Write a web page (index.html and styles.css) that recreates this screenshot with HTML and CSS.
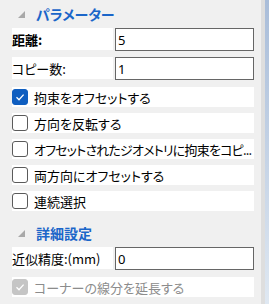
FILE: index.html
```html
<!DOCTYPE html>
<html lang="ja">
<head>
<meta charset="utf-8">
<link rel="stylesheet" href="styles.css">
</head>
<body>
<div class="panel">
  <div class="section-head head-first">
    <svg class="tri" width="7" height="7" viewBox="0 0 7 7"><polygon points="7,0 7,7 0,7" fill="#a8a8a8"/></svg>
    <span>パラメーター</span>
  </div>
  <div class="field">
    <div class="label bold">距離:</div>
    <div class="input">5</div>
  </div>
  <div class="field">
    <div class="label">コピー数:</div>
    <div class="input">1</div>
  </div>
  <div class="check-row">
    <span class="box checked"><svg width="16" height="16" viewBox="0 0 16 16"><path d="M4.5 8.3 L7 10.7 L11.6 5.6" fill="none" stroke="#fff" stroke-width="1.3"/></svg></span>
    <span class="text">拘束をオフセットする</span>
  </div>
  <div class="check-row">
    <span class="box"></span>
    <span class="text">方向を反転する</span>
  </div>
  <div class="check-row">
    <span class="box"></span>
    <span class="text tight">オフセットされたジオメトリに拘束をコピ...</span>
  </div>
  <div class="check-row">
    <span class="box"></span>
    <span class="text">両方向にオフセットする</span>
  </div>
  <div class="check-row">
    <span class="box"></span>
    <span class="text">連続選択</span>
  </div>
  <div class="section-head head-second">
    <svg class="tri" width="7" height="7" viewBox="0 0 7 7"><polygon points="7,0 7,7 0,7" fill="#a8a8a8"/></svg>
    <span>詳細設定</span>
  </div>
  <div class="field">
    <div class="label">近似精度:(mm)</div>
    <div class="input">0</div>
  </div>
  <div class="check-row disabled">
    <span class="box dis"><svg width="16" height="16" viewBox="0 0 16 16"><path d="M4.5 8.3 L7 10.7 L11.6 5.6" fill="none" stroke="#fff" stroke-width="1.3"/></svg></span>
    <span class="text">コーナーの線分を延長する</span>
  </div>
</div>
<div class="strip-gray"></div>
<div class="strip-blue"></div>
</body>
</html>
```

FILE: styles.css
```css
html, body {
  margin: 0;
  padding: 0;
}
body {
  width: 269px;
  height: 304px;
  background: #f0f0f0;
  display: flex;
  overflow: hidden;
  font-family: "Noto Sans CJK JP", "Noto Sans", sans-serif;
  font-feature-settings: "palt";
  font-size: 13px;
  color: #000;
}
.panel {
  width: 242px;
  padding: 0 7px 0 12px;
  display: flex;
  flex-direction: column;
}
.strip-gray {
  width: 4px;
  background: #dedede;
}
.strip-blue {
  width: 4px;
  background: linear-gradient(#a9bdd9, #dfe8f2);
}
.section-head {
  display: flex;
  align-items: center;
  color: #1b66c9;
  font-weight: bold;
  font-size: 14px;
}
.head-first {
  height: 28px;
}
.head-second {
  height: 30px;
  padding-top: 2px;
  box-sizing: border-box;
}
.tri {
  margin-left: 6px;
  margin-right: 11px;
}
.field {
  display: flex;
  height: 23px;
  margin-bottom: 6px;
}
.label {
  width: 101px;
  background: #fff;
  display: flex;
  align-items: center;
  white-space: nowrap;
  height: 22px;
}
.label.bold {
  font-weight: bold;
}
.input {
  margin-left: 2px;
  flex: 1;
  border: 1px solid #666;
  background: #fff;
  box-sizing: border-box;
  padding-left: 2px;
  display: flex;
  align-items: center;
  font-family: "Noto Sans", sans-serif;
}
.check-row {
  display: flex;
  align-items: center;
  height: 20px;
  background: #fff;
  margin-bottom: 6px;
}
.field + .check-row {
  margin-top: 1px;
}
.box {
  width: 16px;
  height: 16px;
  box-sizing: border-box;
  border: 1px solid #5a5a5a;
  border-radius: 3px;
  background: #fff;
  flex: none;
  position: relative;
}
.box svg {
  position: absolute;
  left: -1px;
  top: -1px;
}
.box.checked {
  background: #0f5ec0;
  border-color: #0f5ec0;
}
.box.dis {
  background: #c5c5c5;
  border-color: #c5c5c5;
}
.text {
  margin-left: 6px;
  white-space: nowrap;
}
.tight {
  letter-spacing: -0.8px;
}
.disabled .text {
  color: #8c8c8c;
}
.check-row.disabled {
  margin-top: 1px;
}
```
